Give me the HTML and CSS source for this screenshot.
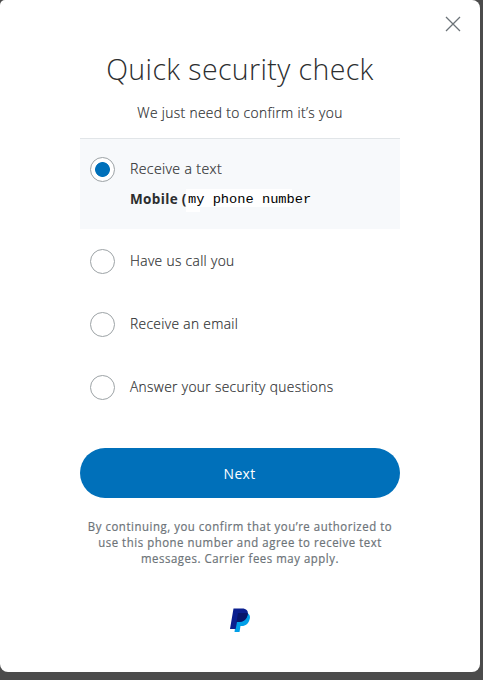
FILE: index.html
```html
<!DOCTYPE html>
<html lang="en">
<head>
<meta charset="utf-8">
<title>Quick security check</title>
<link rel="stylesheet" href="styles.css">
</head>
<body>
<main class="modal">
  <button class="close" aria-label="Close"><svg width="16" height="16" viewBox="0 0 16 16"><path d="M1 1l14 14M15 1L1 15" fill="none" stroke="#6c7378" stroke-width="1.3"/></svg></button>
  <div class="content">
    <h1>Quick security check</h1>
    <p class="subtitle">We just need to confirm it’s you</p>
    <div class="options">
      <label class="option selected"><span class="radio"></span><span class="label"><span class="text first">Receive a text</span><span class="phone"><b>Mobile (</b><span class="number">my phone number</span></span></span></label>
      <label class="option"><span class="radio"></span><span class="label text">Have us call you</span></label>
      <label class="option"><span class="radio"></span><span class="label text">Receive an email</span></label>
      <label class="option"><span class="radio"></span><span class="label text">Answer your security questions</span></label>
    </div>
    <button class="next"><span>Next</span></button>
    <p class="legal">By continuing, you confirm that you’re authorized to<br>use this phone number and agree to receive text<br>messages. Carrier fees may apply.</p>
    <svg class="logo" width="20" height="24" viewBox="0 0 20 24"><path d="M7 5h10.500c2.500 1.500 2.800 4 2.200 6-1 4.500-4 7-8 7H10.500l-1 6H4.500z" fill="#009fe8"/><path d="M3.500 .5H12c4.500 0 6.500 2.500 5.700 6-.8 4.500-4 7.500-8.700 7.500H7L5.700 21H0z" fill="#0a1f8f"/><path d="M8 5h9.800c-.2 5.400-3.600 9-8.800 9H6.500z" fill="#07166b"/></svg>
  </div>
</main>
</body>
</html>
```
FILE: styles.css
```css
* { box-sizing: border-box; }
body {
  margin: 0;
  height: 680px;
  background: #4b4b4b;
  overflow: hidden;
  color: #2c2e2f;
  font: 360 15.3px/24px "Open Sans", "Noto Sans", sans-serif;
  letter-spacing: .4px;
}
.modal {
  position: relative;
  width: 480px;
  height: 672px;
  background: #fff;
  border-radius: 5px 8px 8px 8px;
}
.close {
  position: absolute;
  top: 16px;
  right: 19px;
  width: 16px;
  height: 16px;
  padding: 0;
  border: 0;
  background: none;
}
.close svg { display: block; }
.content {
  display: flex;
  flex-direction: column;
  width: 320px;
  margin: 0 auto;
  padding-top: 49px;
  text-align: center;
}
h1 {
  margin: 0 -20px;
  font-size: 30px;
  font-weight: 310;
  line-height: 40px;
  transform: scaleX(.95);
}
.subtitle { margin: 11px 0 14px; white-space: nowrap; transform: scaleX(.9); }
.subtitle, .text { -webkit-text-stroke: .2px currentColor; }
.options { border-top: 1px solid #e1e5e8; text-align: left; }
.option {
  display: flex;
  gap: 15px;
  height: 63px;
  padding: 20px 10px 18px;
}
.option.selected { height: 90px; padding-top: 18px; background: #f7f9fb; }
.radio {
  flex: none;
  width: 25px;
  height: 25px;
  border: 1px solid #9da3a6;
  border-radius: 50%;
  background: #fff;
}
.selected .radio {
  background: radial-gradient(circle, #0070ba 7px, #fff 7.8px);
}
.label { margin-top: -1px; white-space: nowrap; }
.text { transform: scaleX(.899); transform-origin: left; }
.text.first { transform: scaleX(.92); }
.selected .label { display: flex; flex-direction: column; gap: 6px; }
.phone { display: flex; font-size: 15px; }
.phone b {
  width: 56px;
  font-weight: 700;
  transform: scaleX(.9);
  transform-origin: left;
}
.number {
  height: 23px;
  margin-top: 3px;
  padding: 2px 0 0 2px;
  background:
    linear-gradient(#fff, #fff) 0 0 / 106px 18px no-repeat,
    linear-gradient(#fff, #fff) 0 0 / 14px 23px no-repeat;
  color: #000;
  font: 400 13.700px/18px "Liberation Mono", monospace;
  letter-spacing: 0;
}
.next {
  height: 50px;
  margin-top: 30px;
  border: 0;
  border-radius: 25px;
  background: #0070ba;
  color: #fff;
  font: inherit;
  font-weight: 400;
  letter-spacing: .4px;
}
.next span { display: inline-block; transform: scaleX(.91); }
.legal {
  margin: 21px -20px 0;
  color: #6c7378;
  font-size: 12.500px;
  font-weight: 400;
  letter-spacing: .6px;
  line-height: 16px;
  white-space: nowrap;
  -webkit-text-stroke: .2px currentColor;
  transform: scaleX(.911);
}
.logo { margin: 41px auto 0; }
```
